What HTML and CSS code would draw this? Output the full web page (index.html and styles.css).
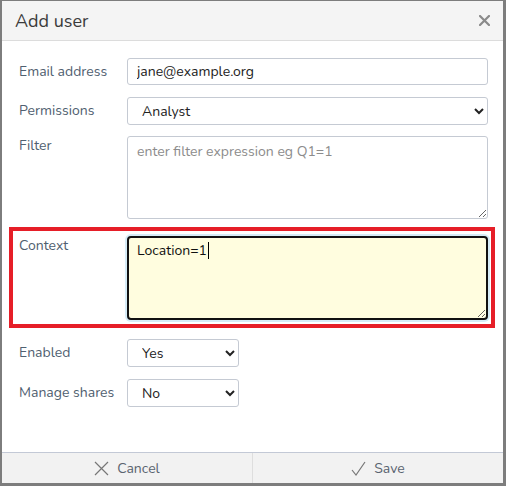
FILE: index.html
```html
<!DOCTYPE html>
<html>
<head>
<meta charset="utf-8">
<link rel="stylesheet" href="styles.css">
</head>
<body>
<div class="dialog">
  <div class="header">
    <h1 class="title">Add user</h1>
    <button class="close" aria-label="Close">
      <svg width="11" height="11" viewBox="0 0 11 11"><path d="M1 1L10 10M10 1L1 10" stroke="#8a8a8a" stroke-width="2.2" stroke-linecap="round"/></svg>
    </button>
  </div>
  <div class="body">
    <div class="row first">
      <label class="label">Email address</label>
      <input class="control" type="text" value="jane@example.org">
    </div>
    <div class="row">
      <label class="label">Permissions</label>
      <select class="control select"><option>Analyst</option></select>
    </div>
    <div class="row row-area">
      <label class="label">Filter</label>
      <textarea class="control area" placeholder="enter filter expression eg Q1=1"></textarea>
    </div>
    <div class="row row-area highlight">
      <label class="label">Context</label>
      <div class="control area context">Location=1<span class="caret"></span></div>
    </div>
    <div class="row first">
      <label class="label">Enabled</label>
      <select class="control select small"><option>Yes</option></select>
    </div>
    <div class="row">
      <label class="label">Manage shares</label>
      <select class="control select small"><option>No</option></select>
    </div>
  </div>
  <div class="footer">
    <button class="btn">
      <svg width="15" height="15" viewBox="0 0 15 15"><path d="M1 1L14 14M14 1L1 14" stroke="#777" stroke-width="1.2"/></svg>
      <span>Cancel</span>
    </button>
    <button class="btn">
      <svg width="15" height="15" viewBox="0 0 15 15"><path d="M1 9L5 14L14 1" stroke="#777" stroke-width="1.2" fill="none"/></svg>
      <span>Save</span>
    </button>
  </div>
</div>
</body>
</html>
```
FILE: styles.css
```css
html, body {
  margin: 0;
  padding: 0;
  height: 100%;
}
body {
  background: #7d7d7d;
  font-family: "Nunito", Lato, "Open Sans", sans-serif;
  padding: 1px 3px 3px 2px;
  box-sizing: border-box;
  height: 486px;
  overflow: hidden;
}
.dialog {
  background: #fff;
  height: 482px;
  display: flex;
  flex-direction: column;
}
.header {
  height: 39px;
  background: #f4f4f4;
  border-bottom: 1px solid #dcdcdc;
  display: flex;
  align-items: center;
  justify-content: space-between;
  padding: 0 13px 0 13px;
}
.title {
  margin: 0;
  font-size: 18px;
  font-weight: 400;
  color: #3b3b3b;
}
.close {
  background: none;
  border: 0;
  padding: 0;
  display: flex;
}
.body {
  flex: 1;
  padding: 17px 15px 0 17px;
}
.row {
  display: flex;
  align-items: flex-start;
  margin-bottom: 11px;
}
.row.first {
  margin-bottom: 12px;
}
.label {
  width: 108px;
  flex: none;
  font-size: 14px;
  line-height: 20px;
  color: #506070;
  padding-top: 4px;
}
.row-area .label {
  padding-top: 0;
}
.control {
  box-sizing: border-box;
  width: 361px;
  height: 27px;
  border: 1px solid #c5cad3;
  border-radius: 3px;
  font-family: inherit;
  font-size: 14px;
  color: #222;
  padding: 0 9px;
  margin: 0;
  background-color: #fff;
  outline: none;
}
.select {
  height: 28px;
  padding: 0 5px 0 10px;
}
.small {
  width: 112px;
}
.area {
  height: 83px;
  padding: 5px 9px;
  resize: vertical;
}
.area::placeholder {
  color: #8c8c8c;
}
.row-area {
  margin-bottom: 8px;
}
.highlight {
  border: 4px solid #e61e28;
  margin: 0 -7px 11px -10px;
  padding: 5px 3px 4px 6px;
}
.context {
  height: 84px;
  border: 2px solid #111;
  border-radius: 4px;
  background: #fffddf;
  box-shadow: 0 0 0 2px #d6ecf7;
  color: #111;
  padding: 4px 8px;
  line-height: 18px;
  overflow: auto;
}
.caret {
  display: inline-block;
  width: 1px;
  height: 17px;
  background: #000;
  vertical-align: -4px;
  margin-left: 1px;
}
.footer {
  height: 30px;
  border-top: 1px solid #c3c9d6;
  background: #f2f2f2;
  display: flex;
}
.btn {
  flex: 1;
  background: none;
  border: 0;
  border-right: 1px solid #dedede;
  display: flex;
  align-items: center;
  justify-content: center;
  gap: 8px;
  font-family: inherit;
  font-size: 14px;
  color: #5a6470;
  padding: 0;
}
.btn:last-child {
  border-right: 0;
}
```
